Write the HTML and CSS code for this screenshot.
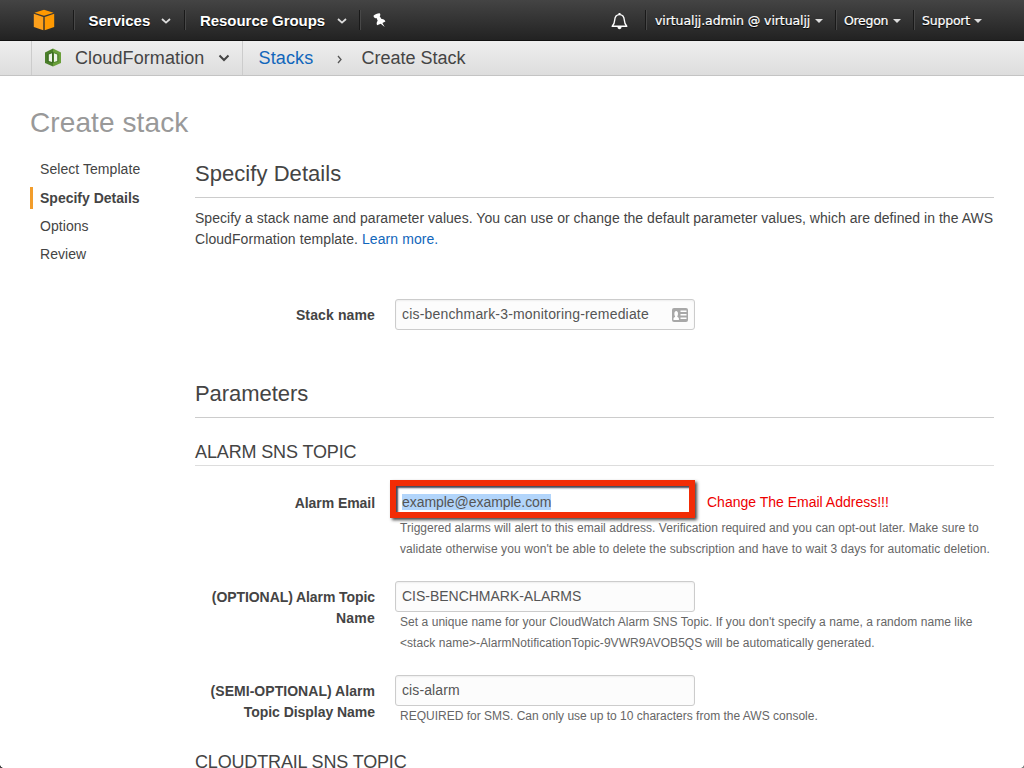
FILE: index.html
```html
<!DOCTYPE html>
<html lang="en">
<head>
<meta charset="utf-8">
<title>CloudFormation - Create Stack</title>
<link rel="stylesheet" href="styles.css">
</head>
<body>
<div class="window">
  <header class="topbar">
    <div class="logo">
      <svg width="22" height="22" viewBox="0 0 22 22"><path fill="#ff9900" d="M11 .8 20.600 3.700 11 6.800 1.400 3.700z"/><path fill="#fca01c" d="M.8 4.800 10.300 7.900V21.200L.8 18z"/><path fill="#ff9900" d="M21.200 4.800 11.700 7.900V21.200l9.500-3.200z"/></svg>
    </div>
    <div class="menu services"><span>Services</span><svg class="chev" width="10" height="6" viewBox="0 0 10 6"><path d="M1 1l4 3.600L9 1"/></svg></div>
    <div class="menu groups"><span>Resource Groups</span><svg class="chev" width="10" height="6" viewBox="0 0 10 6"><path d="M1 1l4 3.600L9 1"/></svg></div>
    <div class="menu pin"><svg width="14" height="15" viewBox="0 0 14 15"><path fill="#fff" d="M.5 2.800C2 1.300 4.300.3 6.400.3c.8.400 1.100 1.200.8 2.100l-.5.900 1.800 2.700c1.900-.2 3.400.8 3.900 2.600l-3 1.300 2.300 4.200-4-3.300-3.600 1.500C3.300 10.600 3.600 9 4.700 7.700L3.500 4.900l-1.200.3C1.200 5 .5 4 .5 2.800z"/></svg></div>
    <div class="spacer"></div>
    <div class="bell"><svg width="17" height="18" viewBox="0 0 17 18"><path fill="none" stroke="#fff" stroke-width="1.400" stroke-linejoin="round" d="M1.200 14.300h14.600c-1.800-1.600-2.300-3.200-2.500-6.300C13.100 4.600 11.500 2.600 8.500 2.600S3.900 4.600 3.700 8c-.2 3.100-.7 4.700-2.500 6.300z"/><path fill="#fff" d="M6.500 15h4c0 1.300-.8 2.200-2 2.200s-2-.9-2-2.200zM7.500.9h2v2h-2z"/></svg></div>
    <div class="menu account user"><span>virtualjj.admin @ virtualjj</span><i class="caret"></i></div>
    <div class="menu account region"><span>Oregon</span><i class="caret"></i></div>
    <div class="menu account support"><span>Support</span><i class="caret"></i></div>
  </header>
  <nav class="crumbs">
    <div class="service">
      <svg width="16" height="19" viewBox="0 0 16 19"><path fill="#4b7f2a" d="M0 4.500 8 .5v18l-8-3.500z"/><path fill="#6a9f3a" d="m8 .5 8 4V15l-8 3.500z"/><path fill="#3b6b22" d="M2.500 6.200 8 4v11l-5.500-1.500z"/><path fill="#4b7f2a" d="m8 4 5.500 2.200v7.300L8 15z"/><path fill="#eef4e8" d="M3.800 6.600 7 5.300v8.600l-3.200-.8zM9 5.300l3.200 1.300v6.500L9 13.900z"/></svg>
      <span class="service-name">CloudFormation</span>
      <svg class="down" width="12" height="8" viewBox="0 0 12 8"><path d="M1.500 1.500 6 6l4.500-4.500"/></svg>
    </div>
    <a class="stacks">Stacks</a>
    <svg class="next" width="5" height="9" viewBox="0 0 5 9"><path d="m1 1 3 3.500L1 8"/></svg>
    <span class="current">Create Stack</span>
  </nav>
  <h1>Create stack</h1>
  <div class="wizard">
    <ul class="steps">
      <li>Select Template</li>
      <li class="active">Specify Details</li>
      <li>Options</li>
      <li>Review</li>
    </ul>
    <main>
      <h2>Specify Details</h2>
      <p class="intro"><span class="i1">Specify a stack name and parameter values. You can use or change the default parameter values, which are defined in the AWS</span><br><span class="i2">CloudFormation template. <a>Learn more.</a></span></p>
      <div class="row stack-row">
        <div class="label"><span class="l1">Stack name</span></div>
        <div class="input"><span class="v1">cis-benchmark-3-monitoring-remediate</span>
          <svg width="16" height="14" viewBox="0 0 16 14"><rect width="16" height="14" rx="2" fill="#a8a8a8"/><path fill="#fff" d="M1.500 12v-1.500c0-1 1.300-1.300 1.700-2C2 7 2 3 4.200 3s2.200 4 1 5.500c.4.700 1.700 1 1.700 2V12zM8.500 2.500h6V4h-6zM8.500 6h6v1.500h-6zM8.500 9.500h6V11h-6z"/></svg>
        </div>
      </div>
      <h2 class="parameters">Parameters</h2>
      <h3 class="alarm-title">ALARM SNS TOPIC</h3>
      <div class="row email-row">
        <div class="label"><span class="l2">Alarm Email</span></div>
        <div>
          <div class="email-line"><div class="email-box"><span class="selected">example@example.com</span></div><span class="callout">Change The Email Address!!!</span></div>
          <p class="help"><span class="h1a">Triggered alarms will alert to this email address. Verification required and you can opt-out later. Make sure to</span><br><span class="h1b">validate otherwise you won't be able to delete the subscription and have to wait 3 days for automatic deletion.</span></p>
        </div>
      </div>
      <div class="row topic-row">
        <div class="label"><span class="l3">(OPTIONAL) Alarm Topic</span><br><span class="l4">Name</span></div>
        <div>
          <div class="input"><span class="v2">CIS-BENCHMARK-ALARMS</span></div>
          <p class="help"><span class="h2a">Set a unique name for your CloudWatch Alarm SNS Topic. If you don't specify a name, a random name like</span><br><span class="h2b">&lt;stack name&gt;-AlarmNotificationTopic-9VWR9AVOB5QS will be automatically generated.</span></p>
        </div>
      </div>
      <div class="row display-row">
        <div class="label"><span class="l5">(SEMI-OPTIONAL) Alarm</span><br><span class="l6">Topic Display Name</span></div>
        <div>
          <div class="input"><span class="v3">cis-alarm</span></div>
          <p class="help"><span class="h3a">REQUIRED for SMS. Can only use up to 10 characters from the AWS console.</span></p>
        </div>
      </div>
      <h3 class="trail-title">CLOUDTRAIL SNS TOPIC</h3>
    </main>
  </div>
  <i class="corner left"></i><i class="corner right"></i>
</div>
</body>
</html>
```

FILE: styles.css
```css
* { box-sizing: border-box; }
body { margin: 0; font: 14px/21px "Liberation Sans", Arial, sans-serif; color: #444; background: #fff; }
.window { position: relative; width: 1024px; height: 768px; overflow: hidden; }
svg { display: block; flex: none; }
a { color: #1166bb; }
h1, h2, h3, p, ul { margin: 0; padding: 0; font-weight: normal; }
span { white-space: nowrap; }

.topbar { display: flex; align-items: center; height: 41px; background: linear-gradient(#444, #222); border-bottom: 1px solid #111; color: #fff; }
.logo { width: 73px; padding-left: 33px; }
.menu { display: flex; align-items: center; height: 20px; border-left: 1px solid #191919; box-shadow: inset 1px 0 #484848; font-size: 15px; font-weight: bold; text-shadow: 0 1px 1px #000; }
.services { width: 111px; padding-left: 14.500px; gap: 11px; }
.groups { width: 175px; padding-left: 15px; gap: 12px; letter-spacing: -.05px; }
.chev { fill: none; stroke: #ddd; stroke-width: 1.8; margin-top: 2px; }
.pin { padding-left: 13px; }
.spacer { flex: 1; }
.bell { width: 34px; padding-top: 1px; }
.account { font: 12.5px/20px "DejaVu Sans", sans-serif; letter-spacing: -.1px; }
.account span { padding-top: 2px; -webkit-text-stroke: .2px #fff; }
.account .caret { margin-top: 2px; border: 4px solid transparent; border-top-color: #ddd; border-bottom: 0; }
.user { width: 190px; padding-left: 9px; gap: 5px; letter-spacing: -.08px; }
.region { width: 78px; padding-left: 8px; gap: 5px; letter-spacing: -.3px; }
.support { width: 111px; padding-left: 8px; gap: 4px; letter-spacing: -.2px; }

.crumbs { display: flex; align-items: center; height: 35px; background: linear-gradient(#eee, #ddd); border-bottom: 1px solid #c4c4c4; font-size: 18px; }
.service { display: flex; align-items: center; margin-left: 31px; width: 212px; height: 34px; padding-left: 13px; border: solid #ccc; border-width: 0 1px; }
.service svg { margin-top: -1px; }
.service-name { width: 131px; margin-left: 14px; letter-spacing: .1px; }
.down { margin-left: 12px; fill: none; stroke: #444; stroke-width: 2; }
.stacks { width: 56px; margin-left: 15.500px; letter-spacing: .15px; }
.next { margin-left: 22px; fill: none; stroke: #555; stroke-width: 1.3; margin-top: 2px; }
.current { margin-left: 20px; }

h1 { margin: 29px 0 0 30px; height: 36px; font-size: 28px; line-height: 36px; color: #999; letter-spacing: .1px; }
.wizard { display: flex; }
.steps { width: 165px; margin-left: 30px; padding-top: 18px; list-style: none; }
.steps li { height: 22px; margin-bottom: 6.300px; line-height: 21px; padding-left: 10px; letter-spacing: .06px; }
.steps .active { border-left: 3px solid #f29d2c; padding-left: 7px; font-weight: bold; line-height: 23px; letter-spacing: 0; }
main { width: 799px; padding-top: 17px; }
h2 { height: 40px; border-bottom: 1px solid #ccc; font-size: 22px; line-height: 32px; letter-spacing: .05px; }
.intro { margin-top: 10px; height: 42px; }
.i1 { letter-spacing: .033px; }
.i2 { letter-spacing: .08px; }
.row { display: grid; grid-template-columns: 180px 1fr; column-gap: 20px; }
.label { text-align: right; font-weight: bold; padding-top: 6px; }
.l1 { letter-spacing: .13px; }
.l2 { letter-spacing: -.05px; }
.l3 { letter-spacing: -.08px; }
.l4 { letter-spacing: .2px; }
.l5 { letter-spacing: .04px; }
.l6 { letter-spacing: -.04px; }
.input { display: flex; align-items: center; justify-content: space-between; width: 300px; height: 31px; padding: 0 6px 1px; border: 1px solid #ccc; border-radius: 3px; background: #fcfcfc; box-shadow: inset 0 1px 2px #eee; color: #555; }
.input svg { margin-top: 2px; }
.v1 { letter-spacing: .18px; }
.v2 { letter-spacing: -.02px; }
.v3 { letter-spacing: .1px; }
.stack-row { margin-top: 49px; height: 31px; }
h2.parameters { margin-top: 48px; letter-spacing: -.05px; }
h3 { font-size: 18px; line-height: 24px; }
.alarm-title { margin-top: 21px; height: 27px; padding-top: 1px; border-bottom: 1px solid #ddd; letter-spacing: -.13px; }
.email-row { margin-top: 14px; height: 101px; }
.email-row .label { padding-top: 13px; }
.email-line { display: flex; align-items: center; height: 38px; margin-left: -5px; }
.email-box { display: flex; align-items: center; width: 305px; height: 38px; padding: 6px 0 0 6px; border: 6px solid #f22c05; box-shadow: 2px 2px 3px #444, inset 2px 2px 2px #445; color: #555; }
.selected { background: #b2d5fb; line-height: 16px; letter-spacing: -.05px; }
.callout { margin-left: 12px; padding-top: 6px; color: #e00; }
.help { padding-left: 5px; font-size: 12px; color: #666; }
.h1a { letter-spacing: .037px; }
.h1b { letter-spacing: .09px; }
.h2a { letter-spacing: .052px; }
.h2b { letter-spacing: .05px; }
.topic-row { height: 94px; }
.display-row { height: 75px; }
.trail-title { letter-spacing: -.16px; }
.corner { position: absolute; bottom: 0; width: 5px; height: 5px; }
.left { left: 0; background: radial-gradient(circle at 100% 0, transparent 5px, #444 5.500px); }
.right { right: 0; background: radial-gradient(circle at 0 0, transparent 5px, #888 5.500px); }
```
